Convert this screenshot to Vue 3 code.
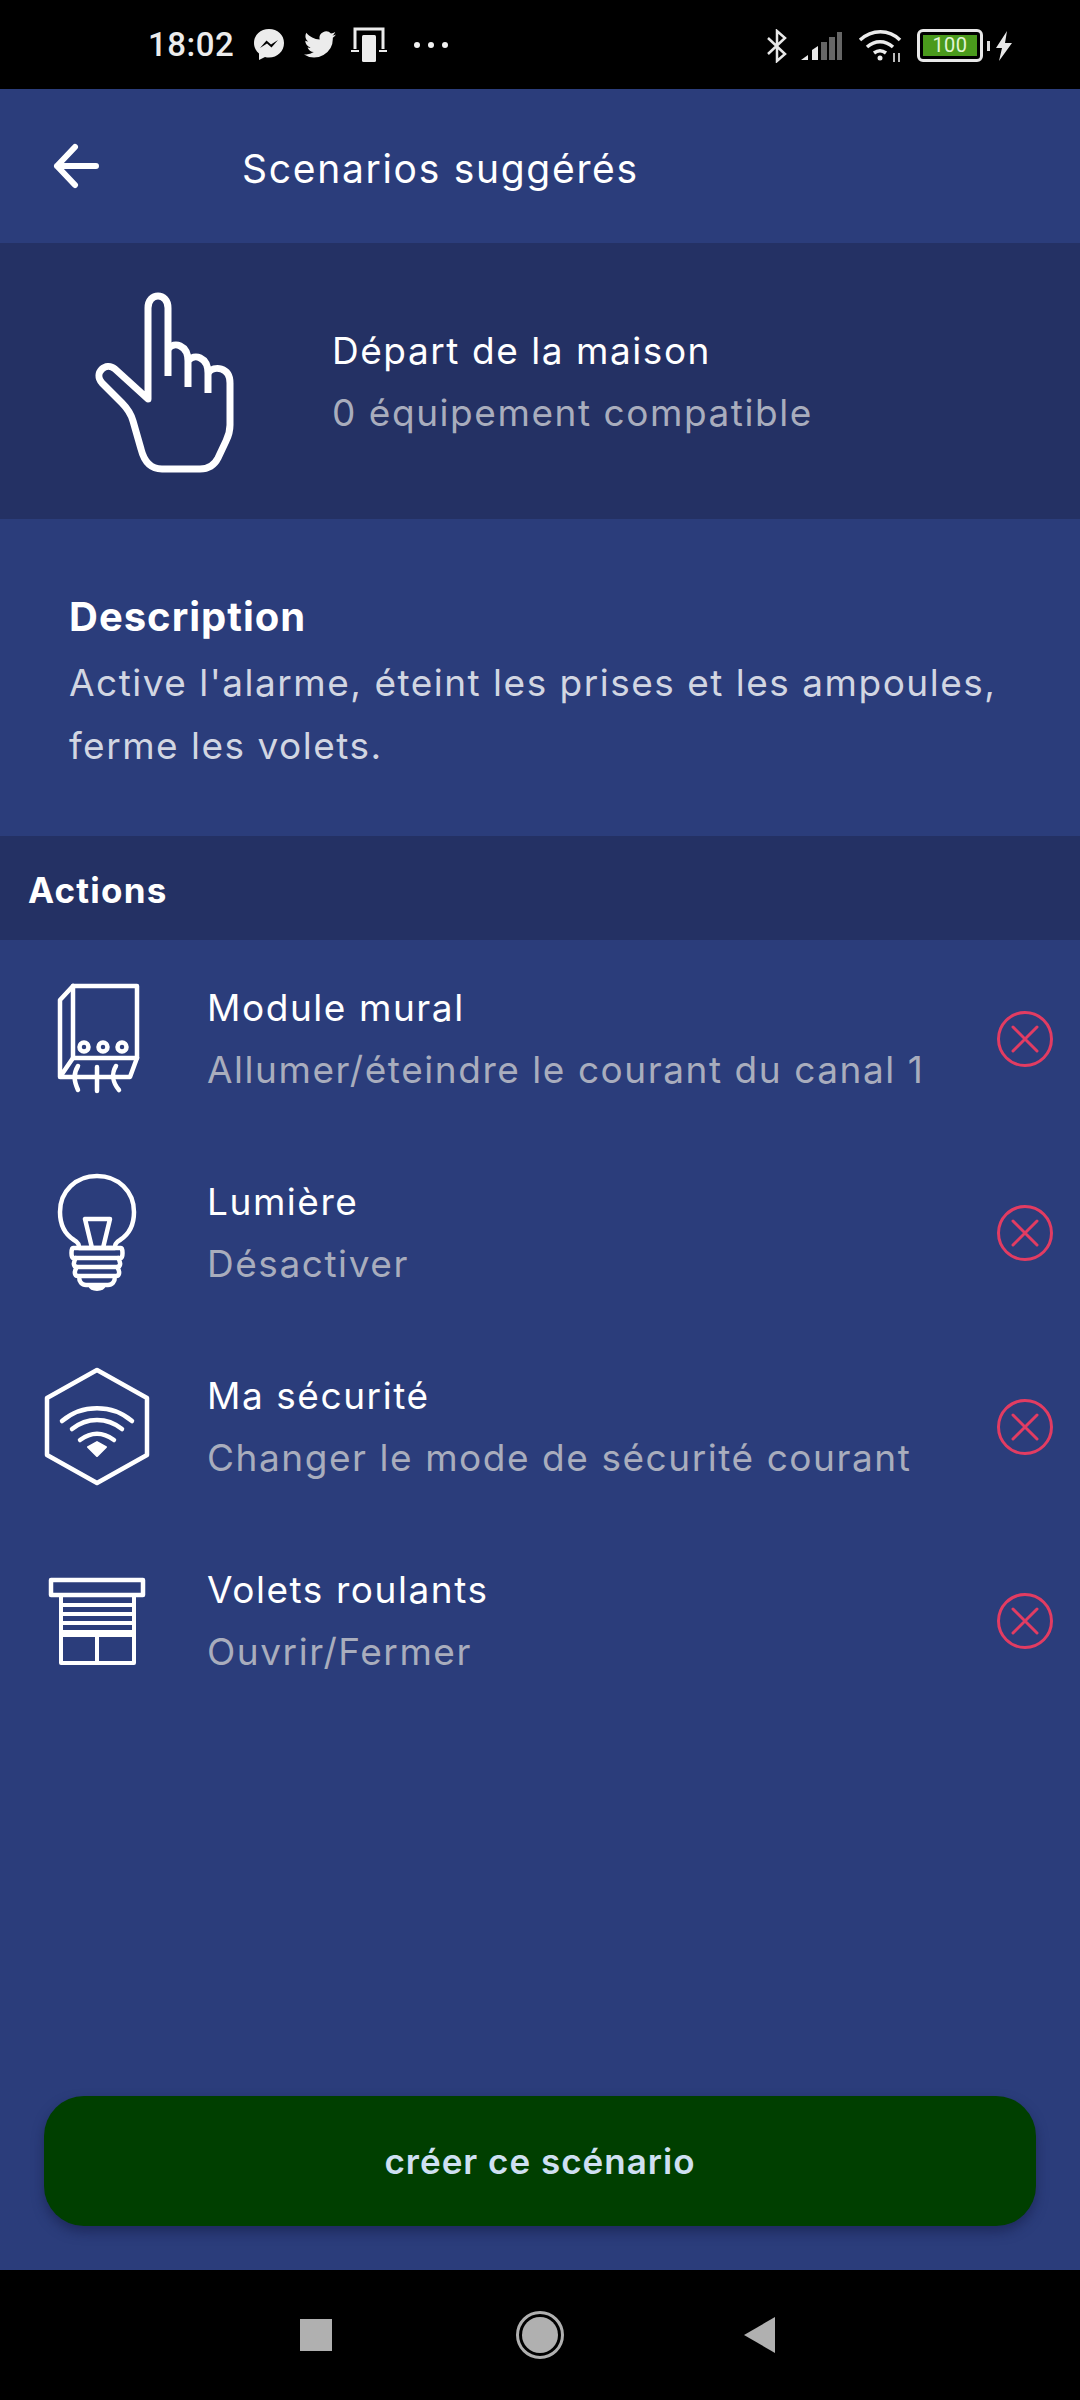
<template>
  <div class="screen">
    <div class="status">
      <div class="status-left">
        <span class="time">18:02</span>
        <svg class="st-icon" width="32" height="34" viewBox="0 0 32 34">
          <path d="M16 1C7.5 1 1 7 1 15c0 4.400 2 8 5 10.500V32l6-3c1.300.4 2.600.5 4 .5 8.500 0 15-6.200 15-14.500S24.500 1 16 1z" fill="#ececec" />
          <path d="M7 20l6.500-7.500 4.500 4 7-4.500-6.500 7.500-4.500-4z" fill="#000" />
        </svg>
        <svg class="st-icon tw" width="34" height="28" viewBox="0 0 34 28">
          <path d="M33 3.500c-1.200.6-2.400.9-3.700 1.100 1.300-.8 2.400-2 2.900-3.600-1.300.8-2.700 1.300-4.200 1.600A6.600 6.600 0 0 0 16.700 8.600C11.400 8.300 6.600 5.800 3.300 1.800c-1.700 3-.9 6.800 2 8.800-1.100 0-2.100-.3-3-.8 0 3.200 2.300 6 5.300 6.600-1 .3-2 .3-3 .1.900 2.700 3.300 4.500 6.200 4.600A13.200 13.200 0 0 1 1 23.400 18.700 18.700 0 0 0 29.800 6.800c1.300-.9 2.400-2 3.200-3.300z" fill="#ececec" />
        </svg>
        <svg class="st-icon ph" width="36" height="36" viewBox="0 0 36 36">
          <path d="M5 22V2h28v20" fill="none" stroke="#ececec" stroke-width="3" transform="translate(-1 0)" />
          <rect x="11" y="8" width="14" height="27" rx="1.500" fill="#ececec" />
          <rect x="0" y="23" width="8" height="2" fill="#ececec" />
          <rect x="28" y="23" width="8" height="2" fill="#ececec" />
        </svg>
        <div class="dots"><i></i><i></i><i></i></div>
      </div>
      <div class="status-right">
        <svg width="22" height="34" viewBox="0 0 22 34" fill="none" stroke="#e8e8e8" stroke-width="2.500">
          <path d="M2 9l17 16-8 7V2l8 7L2 25" />
        </svg>
        <svg width="42" height="30" viewBox="0 0 42 30">
          <path d="M0 29l7-5v5z" fill="#e8e8e8" />
          <path d="M11 19l6-4v14h-6z" fill="#e8e8e8" />
          <rect x="20" y="11" width="6" height="18" fill="#666" />
          <rect x="28" y="6" width="6" height="23" fill="#666" />
          <rect x="36" y="1" width="5" height="28" fill="#666" />
        </svg>
        <svg class="wifi" width="46" height="34" viewBox="0 0 46 34" fill="none" stroke="#ececec" stroke-width="3.500">
          <path d="M2 11c12-11 29-11 40 0" />
          <path d="M9 18c8-7 18-7 26 0" />
          <path d="M16 24c4-3 8-3 12 0" />
          <circle cx="22" cy="29" r="2.500" fill="#ececec" stroke="none" />
          <path d="M36 24v9M41 24v9" stroke-width="2" stroke="#bbb" />
        </svg>
        <div class="battery">
          <div class="batt-box"><span>100</span></div>
          <i class="batt-tip"></i>
        </div>
        <svg class="bolt" width="20" height="32" viewBox="0 0 20 32">
          <path d="M13 1L2 18h6l-3 13 13-18h-7z" fill="#e8e8e8" />
        </svg>
      </div>
    </div>

    <div class="app">
      <header class="topbar">
        <svg class="back" width="46" height="46" viewBox="0 0 46 46" fill="none" stroke="#fff" stroke-width="6" stroke-linecap="round" stroke-linejoin="round">
          <path d="M4 23h39M22 4L4 23l18 19" />
        </svg>
        <h1>Scenarios suggérés</h1>
      </header>

      <section class="hero">
        <svg class="hand" width="200" height="220" viewBox="0 0 200 220" fill="none" stroke="#fff" stroke-width="7" stroke-linejoin="round">
          <path d="M108 105V37C108 21 88 21 88 37V128L55 98C46 90 33 102 42 112L62 132C68 138 71 143 73 150L81 178C84 190 90 198 102 198H140C150 198 155 193 158 187L166 170C169 164 170 160 170 154V112C170 96 154 94 148 102" />
          <path d="M108 78C114 70 128 74 128 90V116M128 90C134 82 148 86 148 102V122" />
        </svg>
        <div class="hero-text">
          <div class="hero-title">Départ de la maison</div>
          <div class="hero-sub">0 équipement compatible</div>
        </div>
      </section>

      <section class="desc">
        <h2>Description</h2>
        <p>Active l'alarme, éteint les prises et les ampoules,<br />ferme les volets.</p>
      </section>

      <div class="band">Actions</div>

      <div class="actions">
        <div v-for="a in actions" :key="a.title" class="row">
          <svg class="row-icon" width="140" height="140" viewBox="0 0 140 140" fill="none" stroke="#fff" stroke-width="4.500" stroke-linejoin="round" stroke-linecap="round">
            <template v-if="a.icon === 'module'">
              <rect x="43" y="17" width="64" height="72" />
              <path d="M43 17L30 31v77l13-19M30 108h70l7-19" />
              <circle cx="54" cy="78" r="4.500" />
              <circle cx="73" cy="78" r="4.500" />
              <circle cx="92" cy="78" r="4.500" />
              <path d="M48 97c-5 8-4 15 0 24M67 98v24M86 97c-5 8-3 17 3 24" />
            </template>
            <template v-else-if="a.icon === 'bulb'">
              <path d="M44 77C33 70 30 59 30 49c0-21 16-36 37-36s37 15 37 36c0 10-3 21-14 28-5 3-5 5-5 8H49c0-3 0-5-5-8z" />
              <path d="M55 56h25l-7 29H62zM43 85h48c2 0 2 10 0 10H43c-2 0-2-10 0-10zM46 95c-3 4-3 9 1 9h40c4 0 4-5 1-9M47 104c-3 4-3 9 1 9h38c4 0 4-5 1-9M49 113c0 6 3 9 7 9h22c4 0 7-3 7-9M60 122c2 5 12 5 14 0" />
            </template>
            <template v-else-if="a.icon === 'hex'">
              <path d="M67 13l50 28v57l-50 28-50-28V41z" />
              <path d="M32 64c20-17 50-17 70 0M42 72c15-12 35-12 50 0M50 83c11-8 23-8 34 0" />
              <path d="M58 90l9-5 9 5-9 9z" fill="#fff" stroke-width="2" />
            </template>
            <template v-else>
              <rect x="21" y="29" width="92" height="15" stroke-linecap="butt" />
              <path d="M31 44v68h73V44M31 54h73M31 63h73M31 72h73M31 81h73M67 84v28" stroke-width="4" stroke-linecap="butt" />
              <path d="M31 84h73" stroke-width="4" stroke-linecap="butt" />
            </template>
          </svg>
          <div class="row-text">
            <div class="row-title">{{ a.title }}</div>
            <div class="row-sub">{{ a.sub }}</div>
          </div>
          <svg class="remove" width="58" height="58" viewBox="0 0 58 58" fill="none" stroke="#e23c62" stroke-width="3">
            <circle cx="29" cy="29" r="26.500" />
            <path d="M17 17l24 24M41 17L17 41" stroke-linecap="round" />
          </svg>
        </div>
      </div>

      <div class="foot">
        <div class="cta">créer ce scénario</div>
      </div>
    </div>

    <nav class="navbar">
      <span class="nav-square"></span>
      <span class="nav-circle"><i></i></span>
      <span class="nav-back"></span>
    </nav>
  </div>
</template>

<script setup>
const actions = [
  { icon: 'module', title: 'Module mural', sub: 'Allumer/éteindre le courant du canal 1' },
  { icon: 'bulb', title: 'Lumière', sub: 'Désactiver' },
  { icon: 'hex', title: 'Ma sécurité', sub: 'Changer le mode de sécurité courant' },
  { icon: 'shutter', title: 'Volets roulants', sub: 'Ouvrir/Fermer' },
]
</script>

<style>
html, body {
  margin: 0;
  background: #000;
}
</style>

<style scoped>
.screen {
  width: 1080px;
  height: 2400px;
  display: flex;
  flex-direction: column;
  font-family: "Inter", "Liberation Sans", sans-serif;
  background: #000;
  color: #fff;
  overflow: hidden;
}
.status {
  height: 89px;
  flex: none;
  display: flex;
  justify-content: space-between;
  align-items: center;
  padding: 0 66px 0 148px;
  box-sizing: border-box;
}
.status-left,
.status-right {
  display: flex;
  align-items: center;
}
.time {
  font-family: "Roboto", sans-serif;
  font-size: 33px;
  font-weight: 500;
  color: #ececec;
  letter-spacing: 0.5px;
  margin-right: 19px;
}
.tw {
  margin-left: 18px;
}
.ph {
  margin-left: 14px;
}
.dots {
  display: flex;
  gap: 8px;
  margin-left: 27px;
}
.dots i {
  width: 6px;
  height: 6px;
  border-radius: 50%;
  background: #f2f2f2;
}
.status-right {
  gap: 13px;
  padding-top: 2px;
}
.wifi {
  margin-left: 2px;
}
.bolt {
  margin-left: -9px;
}
.battery {
  display: flex;
  align-items: center;
  gap: 4px;
}
.batt-box {
  width: 54px;
  height: 21px;
  border: 3px solid #e8e8e8;
  border-radius: 6px;
  padding: 3px;
  box-sizing: content-box;
}
.batt-box span {
  display: block;
  height: 100%;
  background: #4a9a1c;
  color: #e4f5d6;
  font-family: "Roboto", sans-serif;
  font-size: 20px;
  line-height: 21px;
  text-align: center;
  letter-spacing: 0.5px;
}
.batt-tip {
  width: 3px;
  height: 10px;
  background: #ddd;
}
.app {
  flex: 1;
  display: flex;
  flex-direction: column;
  background: #2b3d7b;
}
.topbar {
  height: 154px;
  flex: none;
  display: flex;
  align-items: center;
  padding-left: 53px;
  box-sizing: border-box;
}
.topbar h1 {
  margin: 4px 0 0 143px;
  font-size: 39px;
  font-weight: 400;
  letter-spacing: 1.7px;
}
.hero {
  height: 276px;
  flex: none;
  background: #243164;
  display: flex;
  align-items: center;
}
.hand {
  margin-left: 60px;
  margin-right: 72px;
}
.hero-title,
.hero-sub,
.row-title,
.row-sub {
  font-size: 37px;
  letter-spacing: 1.55px;
  line-height: 62px;
}
.hero-text {
  padding-top: 1px;
}
.hero-sub,
.row-sub {
  color: #a9adbd;
}
.desc {
  height: 317px;
  flex: none;
  box-sizing: border-box;
  padding: 72px 30px 0 69px;
}
.desc h2 {
  margin: 0;
  font-size: 40px;
  line-height: 52px;
  font-weight: 700;
  letter-spacing: 1px;
}
.desc p {
  margin: 8px 0 0;
  font-size: 37px;
  line-height: 63px;
  letter-spacing: 1.5px;
  color: #d2d6e2;
}
.band {
  height: 104px;
  flex: none;
  box-sizing: border-box;
  padding-left: 28px;
  background: #243164;
  font-size: 35px;
  font-weight: 700;
  letter-spacing: 1.2px;
  line-height: 108px;
}
.actions {
  flex: 1;
  padding-top: 2px;
}
.row {
  height: 194px;
  display: flex;
  align-items: center;
}
.row-icon {
  margin-left: 30px;
  margin-right: 37px;
  flex: none;
}
.row-text {
  flex: 1;
}
.remove {
  margin-right: 26px;
  flex: none;
}
.foot {
  flex: none;
  height: 174px;
  padding: 0 44px;
  box-sizing: border-box;
}
.cta {
  height: 130px;
  border-radius: 40px;
  background: #003f00;
  box-shadow: 0 6px 12px rgba(20, 28, 70, 0.55);
  color: #cfe0f2;
  font-size: 35px;
  font-weight: 600;
  letter-spacing: 1px;
  display: flex;
  align-items: center;
  justify-content: center;
  box-sizing: border-box;
}
.navbar {
  height: 130px;
  flex: none;
  background: #000;
  display: flex;
  align-items: center;
  padding-left: 300px;
  box-sizing: border-box;
}
.nav-square {
  width: 32px;
  height: 32px;
  background: #b0b0b0;
}
.nav-circle {
  width: 48px;
  height: 48px;
  border: 3px solid #b0b0b0;
  border-radius: 50%;
  box-sizing: border-box;
  margin-left: 184px;
  display: flex;
  align-items: center;
  justify-content: center;
}
.nav-circle i {
  width: 36px;
  height: 36px;
  border-radius: 50%;
  background: #b0b0b0;
}
.nav-back {
  width: 0;
  height: 0;
  margin-left: 180px;
  border-top: 18px solid transparent;
  border-bottom: 18px solid transparent;
  border-right: 31px solid #b0b0b0;
}
</style>
